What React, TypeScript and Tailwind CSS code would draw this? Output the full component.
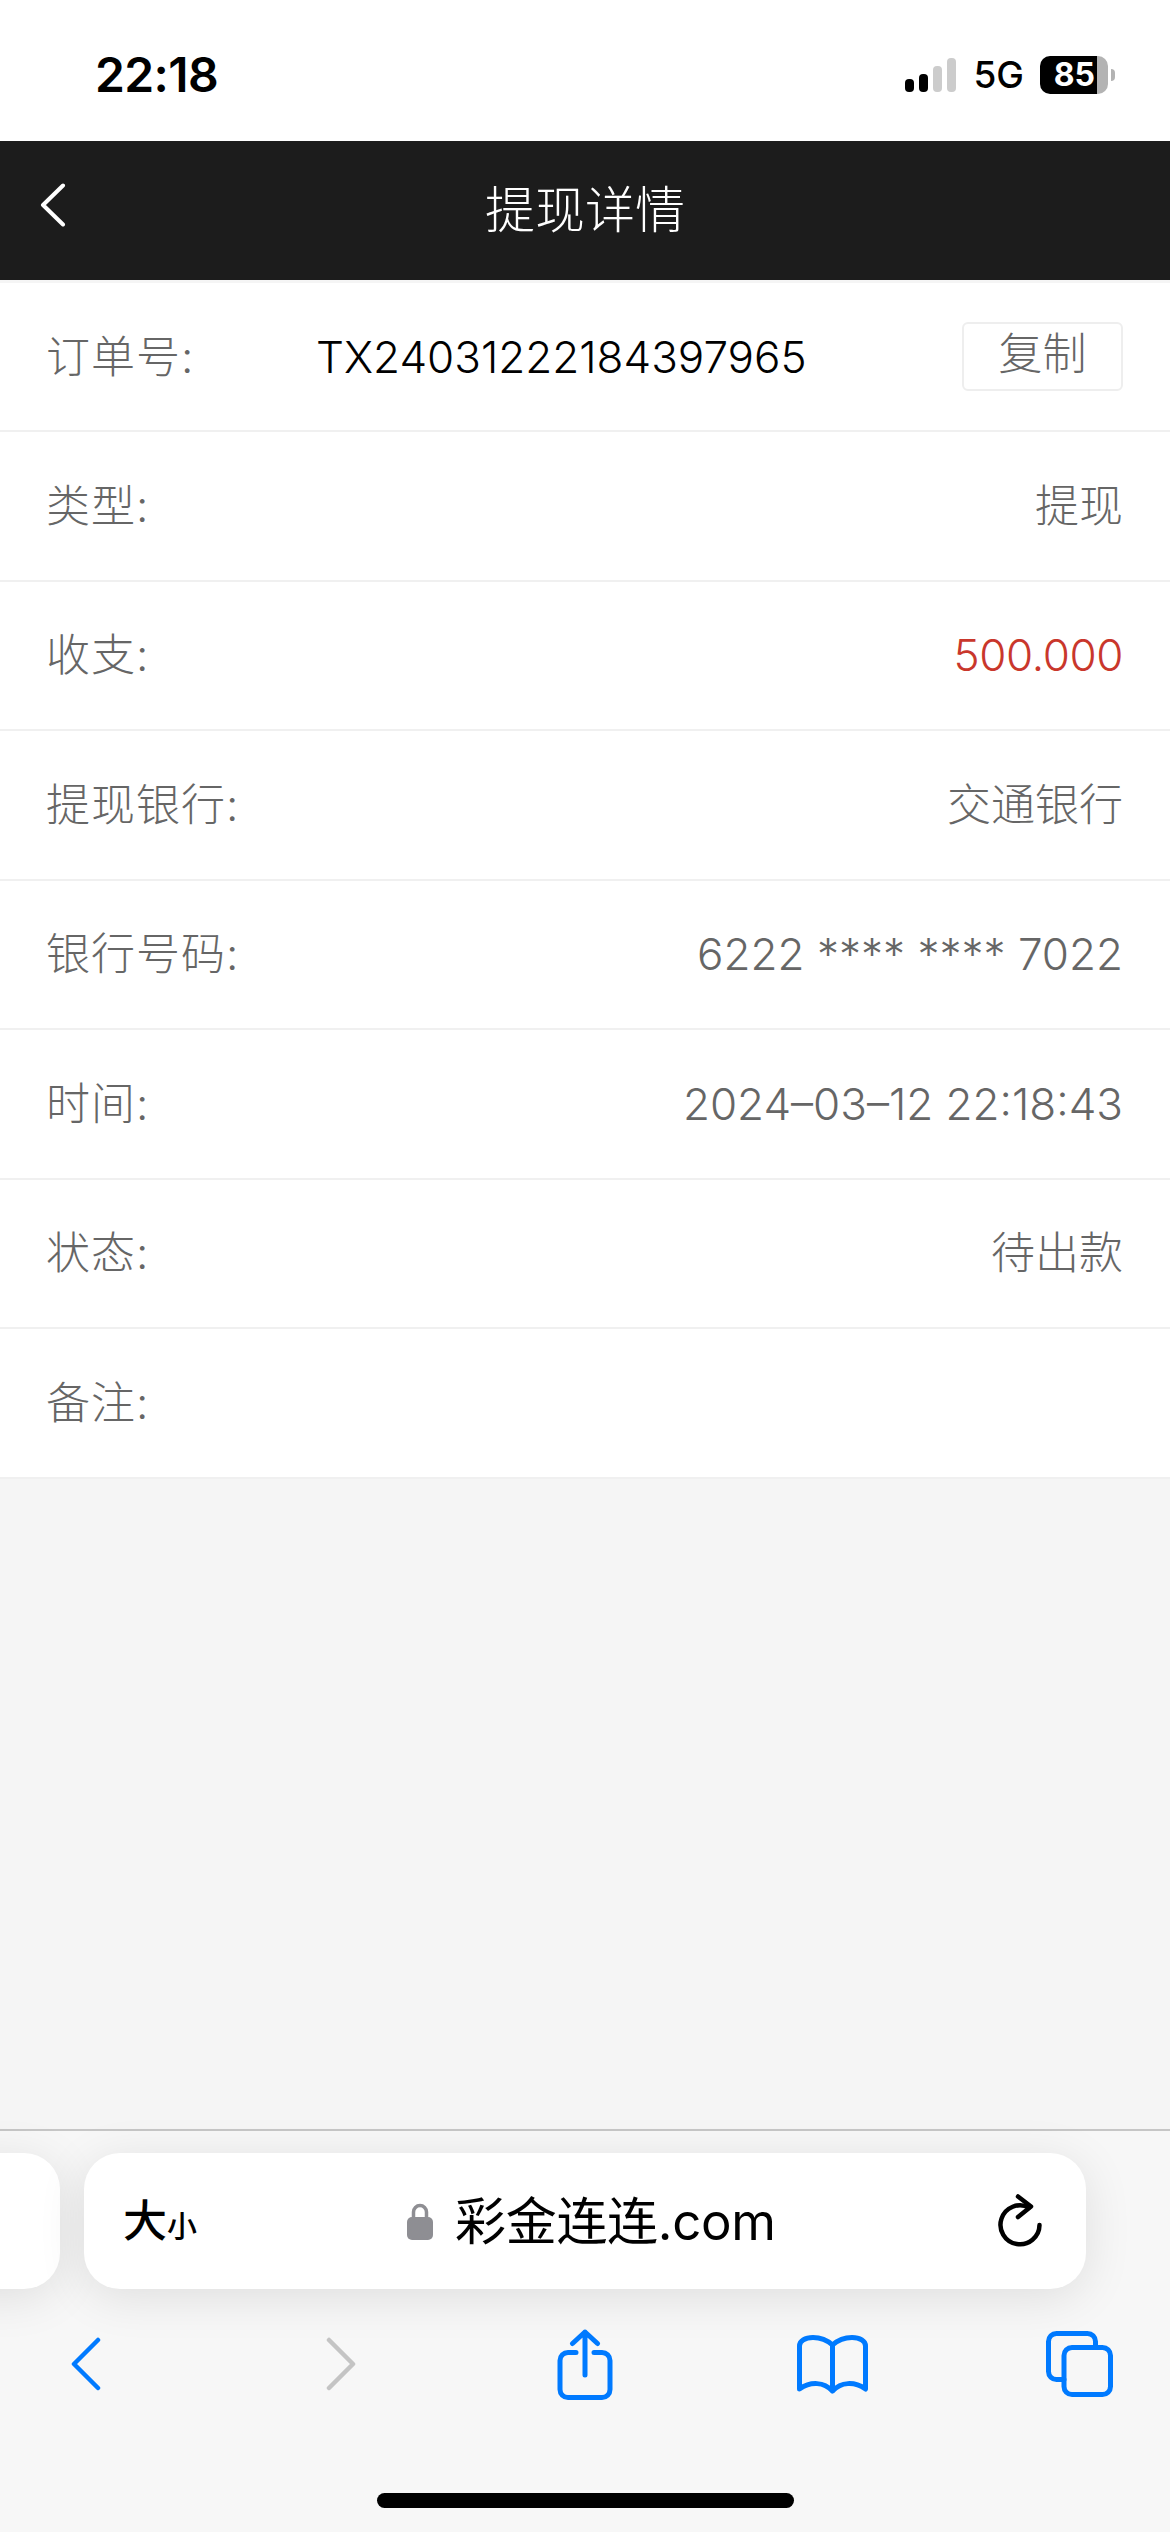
import React from "react";

const FONT = `font-['Inter','Noto_Sans_CJK_SC',sans-serif]`;

type RowProps = { label: string; value?: string; valueClass?: string };

const rows: RowProps[] = [
  { label: "类型:", value: "提现" },
  { label: "收支:", value: "500.000", valueClass: "text-[#c9372c] tracking-[-0.4px]" },
  { label: "提现银行:", value: "交通银行" },
  { label: "银行号码:", value: "6222 **** **** 7022" },
  { label: "时间:", value: "2024–03–12 22:18:43" },
  { label: "状态:", value: "待出款" },
  { label: "备注:" },
];

function Row({ label, value, valueClass = "text-[#666]" }: RowProps) {
  return (
    <div className="flex h-[149.5px] items-center justify-between border-b-2 border-[#f0f0f0] bg-white pl-[46px] pr-[47px] last:border-b-0">
      <span className="text-[44px] font-light tracking-[1px] text-[#666]">{label}</span>
      <span className={`text-[44px] font-light ${valueClass}`}>{value}</span>
    </div>
  );
}

function StatusBar() {
  return (
    <div className="flex h-[141px] items-center justify-between bg-white pl-[95px] pr-[55px] pt-[8px]">
      <span className="text-[48px] font-semibold tracking-[-0.6px] text-black">22:18</span>
      <div className="flex items-center">
        <svg width="51" height="34" viewBox="0 0 51 34">
          <rect x="0" y="21" width="9" height="13" rx="4" fill="#000" />
          <rect x="14" y="16" width="9" height="18" rx="4" fill="#000" />
          <rect x="28" y="8" width="9" height="26" rx="4" fill="#ccc" />
          <rect x="42" y="0" width="9" height="34" rx="4" fill="#ccc" />
        </svg>
        <span className="ml-[17px] text-[37px] font-medium leading-none text-black">5G</span>
        <div className="ml-[16px] flex h-[38px] w-[57px] items-center justify-end overflow-hidden rounded-l-[10px] bg-black pr-[2px]">
          <span className="text-[32px] font-bold leading-none text-white">85</span>
        </div>
        <div className="h-[38px] w-[11px] rounded-r-[10px] bg-[#b3b3b3]" />
        <div className="ml-[3px] h-[12px] w-[4px] rounded-r-full bg-[#b3b3b3]" />
      </div>
    </div>
  );
}

function ToolbarIcons() {
  const blue = "#007aff";
  return (
    <div className="mt-[39px] flex h-[72px] items-center pl-[71px]">
      <svg width="30" height="54" viewBox="0 0 30 54" fill="none" stroke={blue} strokeWidth="4.5" strokeLinecap="round" strokeLinejoin="round">
        <path d="M27 3 3 27l24 24" />
      </svg>
      <svg width="30" height="54" viewBox="0 0 30 54" fill="none" stroke="#c4c4c4" strokeWidth="4.5" strokeLinecap="round" strokeLinejoin="round" className="ml-[225px]">
        <path d="M3 3l24 24L3 51" />
      </svg>
      <svg width="56" height="71" viewBox="0 0 56 71" fill="none" stroke={blue} strokeWidth="5" strokeLinecap="round" strokeLinejoin="round" className="ml-[201px]">
        <path d="M28 46V3M15.5 14.5 28 3l12.5 11.5" />
        <path d="M19 23.5h-8a8 8 0 0 0-8 8v29a8 8 0 0 0 8 8h34a8 8 0 0 0 8-8v-29a8 8 0 0 0-8-8h-8" />
      </svg>
      <svg width="71" height="59" viewBox="0 0 71 59" fill="none" stroke={blue} strokeWidth="5" strokeLinecap="round" strokeLinejoin="round" className="ml-[184px]">
        <path d="M35.5 10C30 5 22 2.5 16 2.5 8 2.5 2.5 6 2.5 11v43c11.500-8 24.500-7 33 2 8.500-9 21.500-10 33-2V11c0-5-5.500-8.500-13.500-8.500-6 0-14 2.500-19.500 7.500Zm0 0v46" />
      </svg>
      <svg width="67" height="66" viewBox="0 0 67 66" fill="none" stroke={blue} strokeWidth="5" strokeLinecap="round" strokeLinejoin="round" className="ml-[178px]">
        <rect x="18" y="16.500" width="46.500" height="47" rx="8" />
        <path d="M18 48.500h-7.500a8 8 0 0 1-8-8v-30a8 8 0 0 1 8-8h31a8 8 0 0 1 8 8v6" />
      </svg>
    </div>
  );
}

function BrowserBar() {
  return (
    <div className="flex h-[403px] flex-col border-t-2 border-[#c6c6c6] bg-[#f7f7f7]">
      <div className="relative mt-[22px] h-[136px] shrink-0">
        <div className="absolute left-[-60px] top-0 h-[136px] w-[120px] rounded-[36px] bg-white shadow-[0_8px_48px_rgba(0,0,0,0.1)]" />
        <div className="absolute left-[84px] top-0 flex h-[136px] w-[1002px] items-center rounded-[36px] bg-white pl-[39px] pr-[44px] shadow-[0_8px_48px_rgba(0,0,0,0.1)]">
          <span className="flex w-[76px] items-baseline font-medium text-black">
            <span className="text-[44px]">大</span>
            <span className="text-[30px]">小</span>
          </span>
          <div className="ml-[208px] flex items-center">
            <svg width="26" height="38" viewBox="0 0 26 38" className="mr-[22px]">
              <path d="M6.500 17v-7a6.500 6.500 0 0 1 13 0v7" fill="none" stroke="#8e8e93" strokeWidth="3.500" />
              <rect x="0" y="15" width="26" height="23" rx="5" fill="#8e8e93" />
            </svg>
            <span className="text-[51px] font-normal leading-none tracking-[-0.3px] text-black">彩金连连.com</span>
          </div>
          <svg width="44" height="54" viewBox="0 0 44 54" fill="none" stroke="#000" strokeWidth="4.500" strokeLinecap="round" strokeLinejoin="round" className="ml-auto">
            <path d="M31 13.500A19.500 19.500 0 1 0 41.500 31" />
            <path d="M20 2.500 33 12.500 20 23" />
          </svg>
        </div>
      </div>
      <ToolbarIcons />
      <div className="mt-auto flex justify-center pb-[24px]">
        <div className="h-[15px] w-[417px] rounded-full bg-black" />
      </div>
    </div>
  );
}

export default function App() {
  return (
    <div className={`flex h-[2532px] w-[1170px] flex-col overflow-hidden bg-[#f5f5f5] ${FONT}`}>
      <StatusBar />
      <div className="relative flex h-[139px] items-center justify-center bg-[#1c1c1c]">
        <svg width="26" height="44" viewBox="0 0 26 44" fill="none" stroke="#fff" strokeWidth="4" strokeLinecap="round" strokeLinejoin="round" className="absolute left-[40px] top-[42px]">
          <path d="M23 2.500 3 22l20 19.500" />
        </svg>
        <span className="text-[50px] font-light text-white">提现详情</span>
      </div>
      <div className="h-[3px] bg-[#f5f5f5]" />
      <div className="flex h-[149px] items-center border-b-2 border-[#f0f0f0] bg-white pl-[46px] pr-[47px]">
        <span className="w-[270px] text-[44px] font-light tracking-[1px] text-[#666]">订单号:</span>
        <span className="text-[44px] font-light text-black">TX24031222184397965</span>
        <button className="ml-auto h-[69px] w-[161px] rounded-[6px] border-2 border-[#eee] pb-[5px] text-[44px] font-light leading-none text-[#666]">
          复制
        </button>
      </div>
      {rows.map((r) => (
        <Row key={r.label} {...r} />
      ))}
      <div className="flex-1" />
      <BrowserBar />
    </div>
  );
}
